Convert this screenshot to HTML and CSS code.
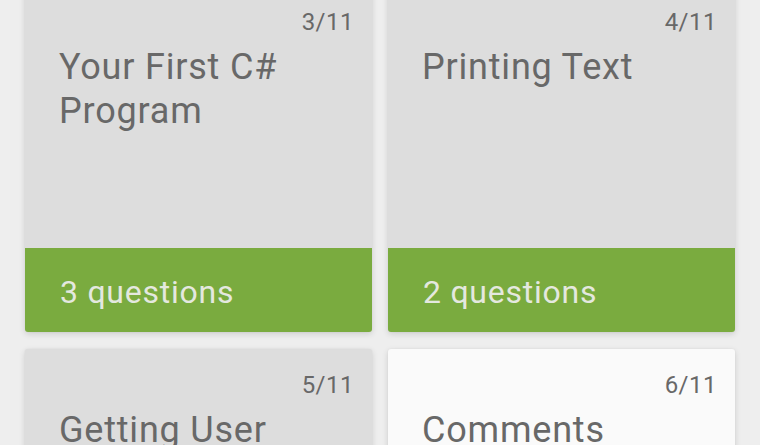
FILE: index.html
```html
<!DOCTYPE html>
<html>
<head>
<meta charset="utf-8">
<link rel="stylesheet" href="styles.css">
</head>
<body>
<div class="grid">
  <div class="card done">
    <div class="num">3/11</div>
    <div class="title">Your First C# Program</div>
    <div class="spacer"></div>
    <div class="footer">3 questions</div>
  </div>
  <div class="card done">
    <div class="num">4/11</div>
    <div class="title">Printing Text</div>
    <div class="spacer"></div>
    <div class="footer">2 questions</div>
  </div>
  <div class="card done">
    <div class="num">5/11</div>
    <div class="title">Getting User Input</div>
    <div class="spacer"></div>
    <div class="footer">2 questions</div>
  </div>
  <div class="card open">
    <div class="num">6/11</div>
    <div class="title">Comments</div>
    <div class="spacer"></div>
  </div>
</div>
</body>
</html>
```
FILE: styles.css
```css
html, body {
  margin: 0;
  padding: 0;
  background: #eeeeee;
  overflow: hidden;
  font-family: Roboto, "Noto Sans", sans-serif;
}
body {
  width: 760px;
  height: 445px;
}
.grid {
  display: grid;
  grid-template-columns: 347px 347px;
  column-gap: 16px;
  row-gap: 17px;
  padding: 0 25px;
  margin-top: -14px;
}
.card {
  height: 346px;
  border-radius: 3px;
  box-shadow: 0 2px 6px rgba(0, 0, 0, 0.14), 0 0 2px rgba(0, 0, 0, 0.06);
  display: flex;
  flex-direction: column;
  overflow: hidden;
  color: #686868;
}
.done {
  background: #dddddd;
}
.open {
  background: #fafafa;
}
.num {
  font-size: 24px;
  line-height: 28px;
  letter-spacing: 0.5px;
  padding: 22px 18px 0 0;
  text-align: right;
}
.title {
  font-size: 36px;
  line-height: 44px;
  letter-spacing: 0.8px;
  margin-top: 9px;
  padding: 0 40px 0 34px;
}
.spacer {
  flex: 1;
}
.footer {
  height: 84px;
  box-sizing: border-box;
  padding: 4px 0 0 35px;
  display: flex;
  align-items: center;
  background: #7aab3f;
  color: #e4e8df;
  font-size: 32px;
  letter-spacing: 0.75px;
}
```
